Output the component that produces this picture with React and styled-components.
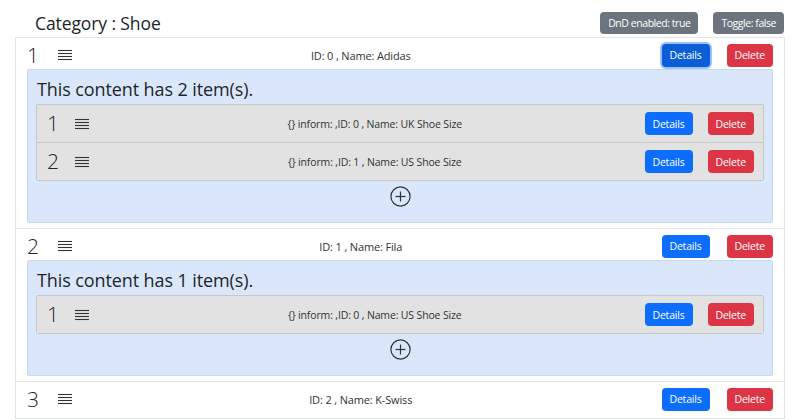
import React from 'react'
import styled, { createGlobalStyle } from 'styled-components'

const GlobalStyle = createGlobalStyle`
    body {
        margin: 0;
        background: #fff;
        font-family: "Open Sans", "Noto Sans", sans-serif;
        color: #212529;
    }
`;

const Page = styled.div`
    padding: 0 15px;
`;

const Header = styled.div`
    display: flex;
    align-items: center;
    justify-content: space-between;
    height: 37px;
    padding: 9px 1px 0 20px;
    box-sizing: border-box;
`;

const Title = styled.h1`
    margin: 0 0 1px;
    font-size: 17.5px;
    font-weight: 400;
    letter-spacing: -0.1px;
`;

const Badges = styled.div`
    display: flex;
    gap: 15px;
`;

const Badge = styled.span`
    background: #6c757d;
    color: #fff;
    font-size: 10.5px;
    line-height: 22px;
    padding: 0 8px;
    border-radius: 4px;
    letter-spacing: -0.45px;
`;

const List = styled.div`
    border: 1px solid #e3e6e9;
    border-bottom: none;
`;

const Item = styled.div`
    padding: 3px 11px 5px 11px;
    border-bottom: 1px solid #e3e6e9;
`;

const Row = styled.div`
    display: flex;
    align-items: center;
    height: ${(p) => (p.inner ? '37px' : '28px')};
`;

const Handle = styled.div`
    display: flex;
    align-items: center;
    gap: ${(p) => (p.inner ? '18px' : '21px')};
`;

const Num = styled.span`
    font-size: 21px;
    font-weight: 300;
    line-height: 1;
    width: 10px;
`;

const Label = styled.div`
    flex: 1;
    text-align: center;
    font-size: ${(p) => (p.inner ? '10.5px' : '11px')};
    letter-spacing: -0.15px;
    color: #333;
    padding-right: ${(p) => (p.inner ? '0' : '12px')};
    padding-left: ${(p) => (p.inner ? '16px' : '0')};
`;

const Buttons = styled.div`
    display: flex;
    gap: ${(p) => (p.inner ? '15px' : '17px')};
`;

const Button = styled.button`
    border: none;
    border-radius: 4px;
    height: 23px;
    padding: 0 8px;
    font-family: inherit;
    font-size: 10.5px;
    letter-spacing: -0.2px;
    color: #fff;
    background: ${(p) => (p.variant === 'danger' ? '#dc3545' : p.focused ? '#0b5ed7' : '#0d6efd')};
    box-shadow: ${(p) => (p.focused ? '0 0 0 2px rgba(49, 132, 253, 0.5)' : 'none')};
`;

const Content = styled.div`
    background: #dae7fb;
    border: 1px solid #c9d8ee;
    border-radius: 2px;
    padding: 6px 8px 15px;
`;

const ContentTitle = styled.div`
    font-size: 18px;
    line-height: 26px;
    margin-bottom: 2px;
    padding-left: 1px;
    letter-spacing: -0.1px;
`;

const SubList = styled.div`
    border: 1px solid #c8c8c8;
    border-radius: 2px;
`;

const SubItem = styled.div`
    background: #e2e2e2;
    padding: 0 9px 0 10px;
    & + & {
        border-top: 1px solid #c8c8c8;
    }
`;

const AddRow = styled.div`
    display: flex;
    justify-content: center;
    padding-top: 5px;
`;

const HandleIcon = () => (
    <svg width="14" height="12" viewBox="0 0 14 12">
        {[1.5, 4.5, 7.5, 10.5].map((y) => (
            <line key={y} x1="0" x2="14" y1={y} y2={y} stroke="#333" strokeWidth="1.1" />
        ))}
    </svg>
);

const PlusIcon = () => (
    <svg width="21" height="21" viewBox="0 0 21 21">
        <circle cx="10.5" cy="10.5" r="9.6" fill="none" stroke="#333" strokeWidth="1.2" />
        <line x1="10.5" x2="10.5" y1="5.5" y2="15.5" stroke="#333" strokeWidth="1.2" />
        <line x1="5.5" x2="15.5" y1="10.5" y2="10.5" stroke="#333" strokeWidth="1.2" />
    </svg>
);

const data = [
    { id: 0, name: 'Adidas', items: ['UK Shoe Size', 'US Shoe Size'] },
    { id: 1, name: 'Fila', items: ['US Shoe Size'] },
    { id: 2, name: 'K-Swiss', items: null },
];

const App = () => {
    return (
        <>
            <GlobalStyle />
            <Page>
                <Header>
                    <Title>Category : Shoe</Title>
                    <Badges>
                        <Badge>DnD enabled: true</Badge>
                        <Badge>Toggle: false</Badge>
                    </Badges>
                </Header>
                <List>
                    {data.map((brand, i) => (
                        <Item key={brand.id}>
                            <Row>
                                <Handle>
                                    <Num>{i + 1}</Num>
                                    <HandleIcon />
                                </Handle>
                                <Label>ID: {brand.id} , Name: {brand.name}</Label>
                                <Buttons>
                                    <Button focused={i === 0}>Details</Button>
                                    <Button variant="danger">Delete</Button>
                                </Buttons>
                            </Row>
                            {brand.items && (
                                <Content>
                                    <ContentTitle>This content has {brand.items.length} item(s).</ContentTitle>
                                    <SubList>
                                        {brand.items.map((name, j) => (
                                            <SubItem key={name}>
                                                <Row inner>
                                                    <Handle inner>
                                                        <Num>{j + 1}</Num>
                                                        <HandleIcon />
                                                    </Handle>
                                                    <Label inner>{'{}'} inform: ,ID: {j} , Name: {name}</Label>
                                                    <Buttons inner>
                                                        <Button>Details</Button>
                                                        <Button variant="danger">Delete</Button>
                                                    </Buttons>
                                                </Row>
                                            </SubItem>
                                        ))}
                                    </SubList>
                                    <AddRow>
                                        <PlusIcon />
                                    </AddRow>
                                </Content>
                            )}
                        </Item>
                    ))}
                </List>
            </Page>
        </>
    )
}

export default App
